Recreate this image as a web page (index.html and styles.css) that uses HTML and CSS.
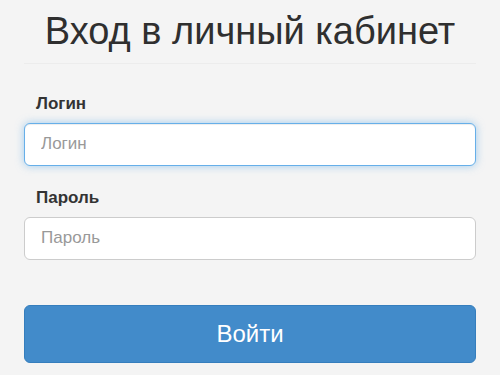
FILE: index.html
```html
<!DOCTYPE html>
<html lang="ru">
<head>
    <meta charset="UTF-8">
    <meta name="viewport" content="width=device-width, initial-scale=1.0">
    <title>Вход в личный кабинет</title>
    <link rel="stylesheet" href="styles.css">
</head>
<body>
    <div class="login-box">
        <h1 class="login-title">Вход в личный кабинет</h1>
        <form class="login-form">
            <div class="form-group">
                <label for="login">Логин</label>
                <input type="text" id="login" class="form-control focused" placeholder="Логин">
            </div>
            <div class="form-group">
                <label for="password">Пароль</label>
                <input type="password" id="password" class="form-control" placeholder="Пароль">
            </div>
            <button type="submit" class="btn-primary">Войти</button>
        </form>
    </div>
</body>
</html>
```

FILE: styles.css
```css
body {
    margin: 0;
    background: #f4f4f4;
    color: #333;
    font-family: "Liberation Sans", Arial, sans-serif;
}
.login-box {
    padding: 0 24px;
}
.login-title {
    margin: 0;
    padding: 11px 0 10px;
    font-size: 38px;
    font-weight: normal;
    line-height: 1.1;
    text-align: center;
    color: #2f2f2f;
    border-bottom: 1px solid #ececec;
}
.login-form {
    padding-top: 30px;
}
.form-group {
    margin-bottom: 22px;
}
.form-group label {
    display: block;
    padding-left: 12px;
    margin-bottom: 9px;
    font-size: 17px;
    font-weight: bold;
    color: #333;
}
.form-control {
    display: block;
    box-sizing: border-box;
    width: 100%;
    height: 43px;
    padding: 0 16px;
    font-family: inherit;
    font-size: 17px;
    color: #555;
    background: #fff;
    border: 1px solid #ccc;
    border-radius: 6px;
}
.form-control::placeholder {
    color: #999;
}
.form-control.focused {
    border-color: #66afe9;
    box-shadow: inset 0 1px 1px rgba(0, 0, 0, .075), 0 0 8px rgba(102, 175, 233, .6);
    outline: 0;
}
.btn-primary {
    display: block;
    width: 100%;
    height: 58px;
    margin-top: 45px;
    font-family: inherit;
    font-size: 24px;
    color: #fff;
    background: #428bca;
    border: 1px solid #357ebd;
    border-radius: 6px;
}
```
